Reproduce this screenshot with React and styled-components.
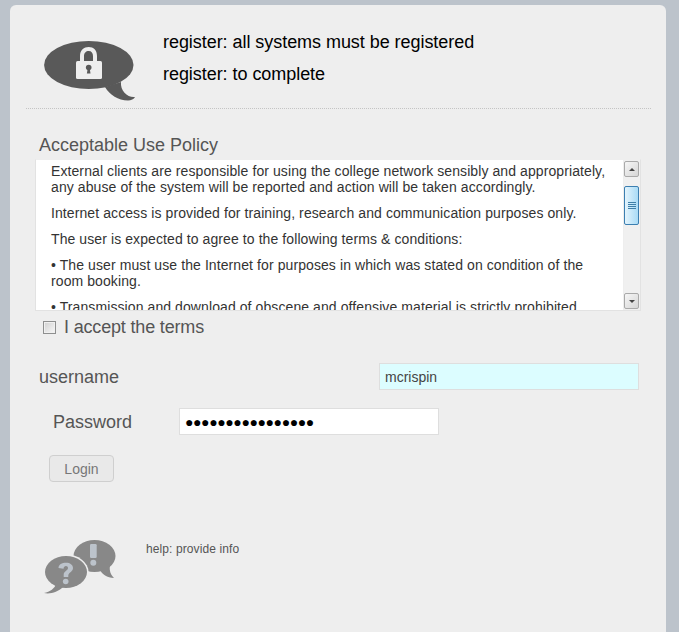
import React from "react";
import styled, { createGlobalStyle } from "styled-components";

const Global = createGlobalStyle`
  html, body { margin: 0; padding: 0; height: 632px; overflow: hidden; background: #bcc3cb; }
  body { font-family: "Liberation Sans", Arial, sans-serif; }
`;
const Card = styled.main`
  box-sizing: border-box;
  width: 656px;
  height: 627px;
  margin: 5px 0 0 10px;
  background: #eeeeee;
  border-radius: 6px 6px 0 0;
  padding: 0 15px 0 16px;
`;
const Header = styled.header`
  display: flex;
  height: 103px;
  border-bottom: 1px dotted #c4c4c4;
`;
const LockIcon = styled.svg`
  width: 92px;
  height: 60px;
  margin: 36px 0 0 18px;
  flex: none;
`;
const HeaderText = styled.div`
  margin: 26px 0 0 27px;
  font-size: 18px;
  line-height: 22px;
  letter-spacing: -0.05px;
  color: #000;
  display: flex;
  flex-direction: column;
  gap: 10px;
`;
const PolicyTitle = styled.h2`
  margin: 26px 0 3px 13px;
  font-size: 18px;
  font-weight: 400;
  line-height: 21px;
  color: #555;
`;
const PolicyBox = styled.div`
  box-sizing: border-box;
  display: flex;
  width: 606px;
  height: 152px;
  margin-left: 9px;
  background: #fff;
  border: 1px solid #e2e2e2;
  border-top-color: #eee;
`;
const PolicyText = styled.div`
  flex: 1;
  overflow: hidden;
  padding: 3px 13px 0 15px;
  font-size: 14px;
  line-height: 16px;
  letter-spacing: 0.09px;
  color: #333;
  p { margin: 0 0 10px; }
`;
const Scrollbar = styled.div`
  width: 16px;
  flex: none;
  display: flex;
  flex-direction: column;
  background: #f0f0f0;
  border-left: 1px solid #eee;
`;
const ArrowBtn = styled.div`
  box-sizing: border-box;
  height: 16px;
  width: 15px;
  margin-top: ${(p) => (p.$down ? "auto" : "1px")};
  margin-bottom: ${(p) => (p.$down ? "1px" : "0")};
  border: 1px solid #a9a9a9;
  border-radius: 2px;
  background: linear-gradient(135deg, #f6f6f6, #d6d6d6);
  display: flex;
  align-items: center;
  justify-content: center;
  &::after {
    content: "";
    border-left: 3px solid transparent;
    border-right: 3px solid transparent;
    ${(p) => (p.$down ? "border-top: 3px solid #444;" : "border-bottom: 3px solid #444;")}
  }
`;
const Thumb = styled.div`
  box-sizing: border-box;
  height: 39px;
  width: 15px;
  margin-top: 9px;
  border: 1px solid #3c7fb1;
  border-radius: 2px;
  background: linear-gradient(90deg, #e3f4fd, #a9dbf6);
  display: flex;
  flex-direction: column;
  align-items: center;
  justify-content: center;
  gap: 1px;
  i { display: block; width: 8px; height: 1px; background: #3f7fa8; }
`;
const AcceptRow = styled.label`
  display: flex;
  align-items: center;
  gap: 8px;
  margin: 5px 0 0 17px;
  height: 22px;
  font-size: 18px;
  letter-spacing: -0.17px;
  color: #555;
`;
const Checkbox = styled.span`
  box-sizing: border-box;
  width: 13px;
  height: 13px;
  border: 1px solid #8e8f8f;
  background: linear-gradient(135deg, #d0d0d0, #f8f8f8);
  box-shadow: inset 0 0 0 1px #f0f0f0;
`;
const UserRow = styled.div`
  display: flex;
  align-items: center;
  justify-content: space-between;
  width: 600px;
  height: 27px;
  margin: 25px 0 0 13px;
`;
const PassRow = styled.div`
  display: flex;
  align-items: center;
  justify-content: space-between;
  width: 386px;
  height: 27px;
  margin: 18px 0 0 27px;
`;
const FieldLabel = styled.label`
  font-size: 18px;
  padding-top: 2px;
  color: #555;
`;
const Field = styled.div`
  box-sizing: border-box;
  width: 260px;
  height: 27px;
  padding: 1px 5px 0;
  border: 1px solid #dedede;
  background: ${(p) => p.$bg};
  color: ${(p) => p.$fg};
  font-size: 14px;
  line-height: 25px;
  letter-spacing: ${(p) => p.$spacing || 0};
  white-space: nowrap;
  overflow: hidden;
`;
const LoginButton = styled.button`
  display: block;
  box-sizing: border-box;
  width: 65px;
  height: 27px;
  margin: 20px 0 0 23px;
  padding: 0;
  border: 1px solid #cfcfcf;
  border-radius: 4px;
  background: #e9e9e9;
  color: #777;
  font: 14px "Liberation Sans", Arial, sans-serif;
`;
const HelpRow = styled.section`
  display: flex;
  margin: 58px 0 0 18px;
`;
const HelpIcon = styled.svg`
  width: 72px;
  height: 54px;
  flex: none;
`;
const HelpText = styled.p`
  margin: 2px 0 0 30px;
  font-size: 12px;
  line-height: 14px;
  letter-spacing: 0.1px;
  color: #555;
`;

export default function App() {
  return (
    <>
      <Global />
      <Card>
        <Header>
          <LockIcon viewBox="0 0 92 60">
            <ellipse cx="44.8" cy="24" rx="44.7" ry="24" fill="#595959" />
            <path d="M61 46 C66 54 74 59.500 84 59.500 C87 59.500 90 58 91 56 C84 57 76 50 77 41 Z" fill="#595959" />
            <path d="M36 20 V15 C36 9 40 6 44.700 6 C49.500 6 53 9 53 15 V20 H49 V15 C49 12 47.500 10 44.700 10 C42 10 40 12 40 15 V20 Z" fill="#eee" />
            <rect x="32" y="20" width="26" height="18" rx="1.500" fill="#eee" />
            <circle cx="44.700" cy="26.500" r="2.800" fill="#595959" />
            <path d="M43.700 27.500 H45.700 L46.500 32.500 H42.900 Z" fill="#595959" />
          </LockIcon>
          <HeaderText>
            <span>register: all systems must be registered</span>
            <span>register: to complete</span>
          </HeaderText>
        </Header>
        <PolicyTitle>Acceptable Use Policy</PolicyTitle>
        <PolicyBox>
          <PolicyText>
            <p>External clients are responsible for using the college network sensibly and appropriately, any abuse of the system will be reported and action will be taken accordingly.</p>
            <p>Internet access is provided for training, research and communication purposes only.</p>
            <p>The user is expected to agree to the following terms &amp; conditions:</p>
            <p>• The user must use the Internet for purposes in which was stated on condition of the room booking.</p>
            <p>• Transmission and download of obscene and offensive material is strictly prohibited.</p>
          </PolicyText>
          <Scrollbar>
            <ArrowBtn />
            <Thumb><i /><i /><i /><i /></Thumb>
            <ArrowBtn $down />
          </Scrollbar>
        </PolicyBox>
        <AcceptRow>
          <Checkbox />
          I accept the terms
        </AcceptRow>
        <UserRow>
          <FieldLabel>username</FieldLabel>
          <Field $bg="#dcfdff" $fg="#444">mcrispin</Field>
        </UserRow>
        <PassRow>
          <FieldLabel>Password</FieldLabel>
          <Field $bg="#fff" $fg="#000" $spacing="-0.4px">●●●●●●●●●●●●●●●●</Field>
        </PassRow>
        <LoginButton type="button">Login</LoginButton>
        <HelpRow>
          <HelpIcon viewBox="0 0 72 54">
            <ellipse cx="50.500" cy="16" rx="21" ry="16" fill="#888" />
            <path d="M56 30 C58 34 63 38 70 38 C67 35 65 31 66 25 Z" fill="#888" />
            <ellipse cx="22" cy="32" rx="22.500" ry="17.500" fill="#eee" />
            <ellipse cx="22" cy="32" rx="21" ry="16" fill="#888" />
            <path d="M12 44 C11 48 6 52 0 53 C6 54.500 14 52 19 47 Z" fill="#888" />
            <rect x="46" y="4" width="6.700" height="14" rx="1.200" fill="#bcc3cb" />
            <circle cx="49.300" cy="22.700" r="3" fill="#bcc3cb" />
            <path d="M14.500 28 C14.500 24.500 18 22.700 22 22.700 C26 22.700 29 24.700 29 28 C29 31.500 25 32.500 24.300 35 V37 H19.700 V34.500 C19.700 31.500 24 30.500 24 28 C24 26.700 23 26 22 26 C20.700 26 19.700 27 19.500 28.800 Z" fill="#bcc3cb" />
            <circle cx="21.700" cy="41.500" r="2.800" fill="#bcc3cb" />
          </HelpIcon>
          <HelpText>help: provide info</HelpText>
        </HelpRow>
      </Card>
    </>
  );
}
